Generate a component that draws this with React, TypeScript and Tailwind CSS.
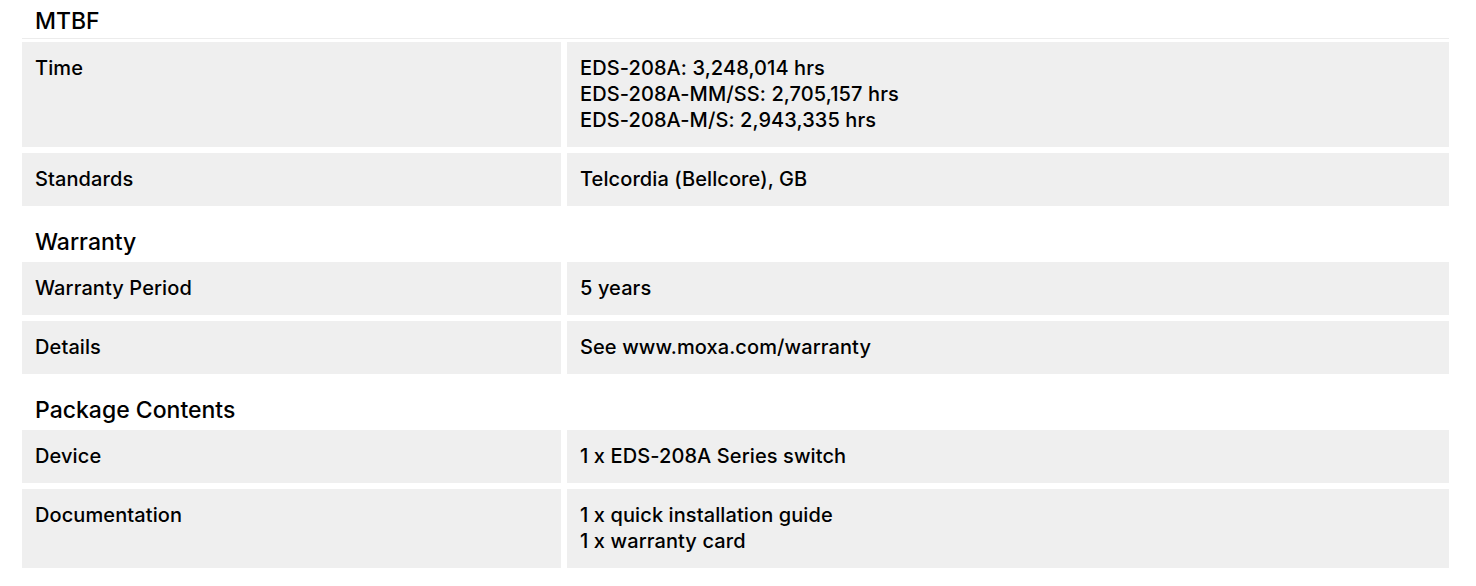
import React from "react";

type Row = { label: string; value: string[] };
type Section = { title: string; rows: Row[] };

const sections: Section[] = [
  {
    title: "MTBF",
    rows: [
      {
        label: "Time",
        value: [
          "EDS-208A: 3,248,014 hrs",
          "EDS-208A-MM/SS: 2,705,157 hrs",
          "EDS-208A-M/S: 2,943,335 hrs",
        ],
      },
      { label: "Standards", value: ["Telcordia (Bellcore), GB"] },
    ],
  },
  {
    title: "Warranty",
    rows: [
      { label: "Warranty Period", value: ["5 years"] },
      { label: "Details", value: ["See www.moxa.com/warranty"] },
    ],
  },
  {
    title: "Package Contents",
    rows: [
      { label: "Device", value: ["1 x EDS-208A Series switch"] },
      {
        label: "Documentation",
        value: ["1 x quick installation guide", "1 x warranty card"],
      },
    ],
  },
];

function SpecTable({ rows }: { rows: Row[] }) {
  return (
    <div className="flex flex-col gap-[6px]">
      {rows.map((r) => (
        <div key={r.label} className="grid grid-cols-[539px_1fr] gap-[6px]">
          <div className="bg-[#efefef] pl-[13px] pr-[14px] pt-[13px] pb-[14px]">{r.label}</div>
          <div className="bg-[#efefef] pl-[13px] pr-[14px] pt-[13px] pb-[14px]">
            {r.value.map((v) => (
              <div key={v}>{v}</div>
            ))}
          </div>
        </div>
      ))}
    </div>
  );
}

export default function App() {
  return (
    <div
      className="bg-white w-[1476px] h-[586px] overflow-hidden text-black"
      style={{ fontFamily: "Inter, 'Liberation Sans', Arial, sans-serif" }}
    >
      <div className="ml-[22px] w-[1427px] text-[20px] leading-[26px] font-medium tracking-[0.1px]">
        {sections.map((s, i) => (
          <div key={s.title}>
            {i === 0 ? (
              <div className="pt-[8px] pb-[4px] pl-[13px] text-[23px] leading-[26px] tracking-normal border-b border-[#ececec] mb-[3px]">
                {s.title}
              </div>
            ) : (
              <div className="pt-[23px] pb-[7px] pl-[13px] text-[23px] leading-[26px] tracking-normal">
                {s.title}
              </div>
            )}
            <SpecTable rows={s.rows} />
          </div>
        ))}
      </div>
    </div>
  );
}
